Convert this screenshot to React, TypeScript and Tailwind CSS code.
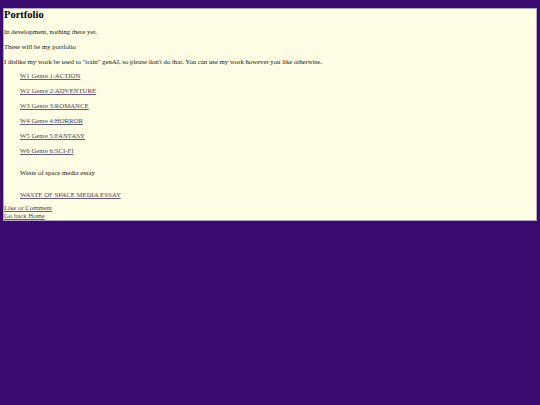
const works = [
  'W1 Genre 1:ACTION',
  'W2 Genre 2:ADVENTURE',
  'W3 Genre 3:ROMANCE',
  'W4 Genre 4:HORROR',
  'W5 Genre 5:FANTASY',
  'W6 Genre 6:SCI-FI',
];

const link = 'underline decoration-[#6a5a76] text-[#4e3a5c] self-start';

export default function App() {
  return (
    <div className="min-h-[405px] w-[540px] bg-[#3a0a6e] pt-[8px] px-[3px] font-['Liberation_Serif',serif] text-[6.75px] leading-[8px] text-[#141414]">
      <div className="border border-[#b4a6c6] bg-[#fffee4] flex flex-col">
        <h2 className="text-[10.5px] leading-[12px] font-bold text-black">Portfolio</h2>
        <p className="mt-[7px]">In development, nothing there yet.</p>
        <p className="mt-[7px]">These will be my portfolio</p>
        <p className="mt-[7px]">
          I dislike my work be used to "train" genAI, so please don't do that. You can use my work however you like otherwise.
        </p>

        {/* works list */}
        <ul className="mt-[6px] pl-[16px] flex flex-col gap-[7px]">
          {works.map((w) => (
            <li key={w}>
              <a href="#" className={link}>{w}</a>
            </li>
          ))}
        </ul>

        <p className="mt-[14px] pl-[16px]">Waste of space media essay</p>
        <a href="#" className={'mt-[14px] ml-[16px] ' + link}>WASTE OF SPACE MEDIA ESSAY</a>

        <a href="#" className={'mt-[5px] ' + link}>Like or Comment</a>
        <a href="#" className={link}>Go back Home</a>
      </div>
    </div>
  );
}
